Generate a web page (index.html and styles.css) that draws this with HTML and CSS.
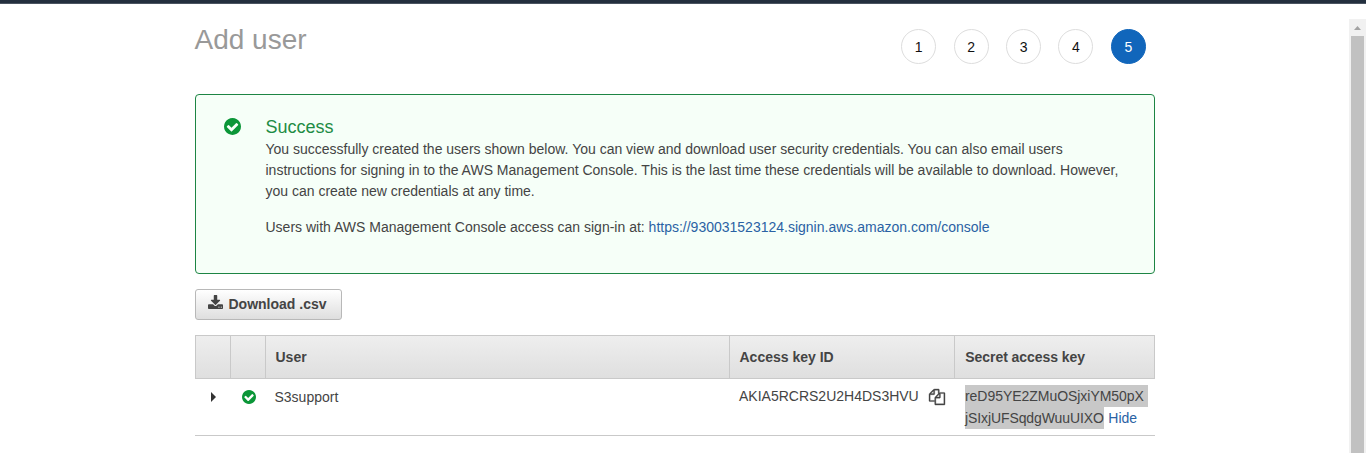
FILE: index.html
```html
<!DOCTYPE html>
<html lang="en">
<head>
<meta charset="utf-8">
<title>Add user</title>
<link rel="stylesheet" href="styles.css">
</head>
<body>
<svg class="sprite" aria-hidden="true">
  <symbol id="check" viewBox="0 0 1536 1536"><path d="M1284 606q0-28-18-46l-91-90q-19-19-45-19t-45 19l-408 407-226-226q-19-19-45-19t-45 19l-91 90q-18 18-18 46 0 27 18 45l362 362q19 19 45 19 27 0 46-19l543-543q18-18 18-45zm252 162q0 209-103 385.5t-279.5 279.5-385.5 103-385.5-103-279.5-279.5-103-385.5 103-385.5 279.5-279.5 385.5-103 385.5 103 279.5 279.5 103 385.5z"/></symbol>
</svg>
<div class="navbar"></div>
<div class="viewport">
  <main class="content">
    <header class="page-head">
      <h1 class="title">Add user</h1>
      <ol class="steps">
        <li class="step">1</li>
        <li class="step">2</li>
        <li class="step">3</li>
        <li class="step">4</li>
        <li class="step step-active">5</li>
      </ol>
    </header>
    <section class="alert">
      <svg class="alert-icon"><use href="#check"/></svg>
      <div class="alert-body">
        <h2 class="alert-title">Success</h2>
        <p class="alert-text">You successfully created the users shown below. You can view and download user security credentials. You can also email users<br>instructions for signing in to the AWS Management Console. This is the last time these credentials will be available to download. However,<br>you can create new credentials at any time.</p>
        <p class="alert-text">Users with AWS Management Console access can sign-in at: <a class="link">https://930031523124.signin.aws.amazon.com/console</a></p>
      </div>
    </section>
    <button class="download">
      <svg class="download-icon" viewBox="0 0 1664 1536"><path d="M1280 1344q0-26-19-45t-45-19-45 19-19 45 19 45 45 19 45-19 19-45zm256 0q0-26-19-45t-45-19-45 19-19 45 19 45 45 19 45-19 19-45zm128-224v320q0 40-28 68t-68 28h-1472q-40 0-68-28t-28-68v-320q0-40 28-68t68-28h465l135 136q58 56 136 56t136-56l136-136h464q40 0 68 28t28 68zm-325-569q17 41-14 70l-448 448q-18 19-45 19t-45-19l-448-448q-31-29-14-70 17-39 59-39h256v-448q0-26 19-45t45-19h256q26 0 45 19t19 45v448h256q42 0 59 39z"/></svg>
      <span class="download-label">Download .csv</span>
    </button>
    <div class="table">
      <div class="row row-head">
        <div class="th"></div>
        <div class="th"></div>
        <div class="th">User</div>
        <div class="th">Access key ID</div>
        <div class="th">Secret access key</div>
      </div>
      <div class="row row-body">
        <div class="td td-arrow"><svg class="caret" viewBox="0 0 5 10"><path d="M0 0L5 5L0 10z"/></svg></div>
        <div class="td td-status"><svg class="status-icon"><use href="#check"/></svg></div>
        <div class="td td-user">S3support</div>
        <div class="td td-key"><span class="key-id">AKIA5RCRS2U2H4DS3HVU</span><svg class="copy" viewBox="0 0 1792 1792"><path d="M1696 384q40 0 68 28t28 68v1216q0 40-28 68t-68 28h-960q-40 0-68-28t-28-68v-288h-544q-40 0-68-28t-28-68v-672q0-40 20-88t48-76l408-408q28-28 76-48t88-20h416q40 0 68 28t28 68v328q68-40 128-40h416zm-544 213l-299 299h299v-299zm-640-384l-299 299h299v-299zm196 647l316-316v-416h-384v416q0 40-28 68t-68 28h-416v640h512v-256q0-40 20-88t48-76zm956 804v-1152h-384v416q0 40-28 68t-68 28h-416v640h896z"/></svg></div>
        <div class="td td-secret">
          <div class="secret-line"><span class="selected selected-wide">reD95YE2ZMuOSjxiYM50pX</span></div>
          <div class="secret-line"><span class="selected selected-end">jSIxjUFSqdgWuuUIXO</span><a class="link hide">Hide</a></div>
        </div>
      </div>
    </div>
  </main>
  <div class="scrollbar">
    <svg class="scroll-up" viewBox="0 0 7 4"><path d="M3.5 0L7 4H0z"/></svg>
    <div class="thumb"></div>
  </div>
</div>
</body>
</html>
```
FILE: styles.css
```css
* { box-sizing: border-box; }
body {
  margin: 0;
  height: 453px;
  overflow: hidden;
  background: #fff;
  color: #444;
  font: 14px/21px "Liberation Sans", Arial, sans-serif;
}
h1, h2, p, ol { margin: 0; padding: 0; font-weight: normal; }
.sprite { display: none; }
.navbar { height: 4px; background: #232f3e; border-bottom: 1px solid #4a5461; }
.viewport { display: flex; justify-content: space-between; height: 449px; }
.content { width: 960px; margin-left: 195px; }
.page-head { display: flex; justify-content: space-between; height: 90px; padding: 18px 9px 0 0; }
.title { margin: 1px 0 0 -0.5px; font-size: 28px; line-height: 34px; color: #999; }
.steps { display: flex; gap: 17.4px; list-style: none; padding: 7px 0.2px 0 0; }
.step {
  width: 35px;
  height: 35px;
  border: 1px solid #ddd;
  border-radius: 50%;
  line-height: 34px;
  text-align: center;
  color: #111;
}
.step-active { background: #1166bb; border-color: #1166bb; color: #fff; }
.alert {
  display: flex;
  height: 180px;
  padding: 22px 28px 0 27.5px;
  border: 1px solid #1d8544;
  border-radius: 4px;
  background: #f6fff8;
}
.alert-icon { width: 17px; height: 17px; margin: 0.5px 25px 0 0; fill: #0b9638; flex: none; }
.alert-body { white-space: nowrap; }
.alert-title { font-size: 18px; line-height: 20px; color: #1e8c45; margin-bottom: 2px; }
.alert-text { margin-bottom: 15px; }
.link { color: #2a62a4; }
.download {
  display: flex;
  width: 147px;
  height: 31px;
  margin: 15px 0;
  padding: 5px 0 0 11.5px;
  border: 1px solid #b8b8b8;
  border-radius: 3px;
  background: linear-gradient(#fff, #dedede);
  color: #444;
  font: bold 14px/18px "Liberation Sans", Arial, sans-serif;
}
.download-icon { width: 15px; height: 14px; margin-right: 6px; fill: #444; }
.row { display: grid; grid-template-columns: 35px 35px 464px 225px 201px; }
.row-head {
  height: 44px;
  border: 1px solid #c9c9c9;
  background: linear-gradient(#eee, #dfdfdf);
  font-weight: bold;
  grid-template-columns: 35px 35px 464px 225px 199px;
}
.th { padding: 11px 0 0 9.5px; border-right: 1px solid #c9c9c9; }
.th:last-child { padding-left: 10.3px; border-right: 0; letter-spacing: -0.06px; }
.row-body { height: 57px; border-bottom: 1px solid #c9c9c9; }
.td { padding-top: 7px; white-space: nowrap; }
.td-arrow { padding: 13px 0 0 16px; }
.caret { display: block; width: 5px; height: 10px; fill: #333; }
.td-status { padding: 11px 0 0 12px; }
.status-icon { display: block; width: 14px; height: 14px; fill: #0b9638; }
.td-user { padding-left: 9.5px; padding-top: 8px; }
.td-key { display: flex; padding-left: 10px; }
.copy { width: 16px; height: 16px; margin: 3px 0 0 10px; fill: #444; stroke: #444; stroke-width: 40; overflow: visible; }
.td-secret { padding: 6px 0 0 11px; }
.secret-line { display: flex; height: 22px; line-height: 22px; }
.selected { background: #c8c8c8; }
.selected-wide { padding-right: 4px; letter-spacing: -0.04px; }
.selected-end { letter-spacing: -0.1px; }
.hide { margin-left: 4.5px; }
.scrollbar {
  display: flex;
  flex-direction: column;
  align-items: center;
  width: 17px;
  height: 434px;
  margin-top: 15px;
  background: #f1f1f1;
}
.scroll-up { width: 7px; height: 4px; margin: 7px 0 6px; fill: #a3a3a3; flex: none; }
.thumb { width: 13px; flex: 1; background: #c1c1c1; }
```
